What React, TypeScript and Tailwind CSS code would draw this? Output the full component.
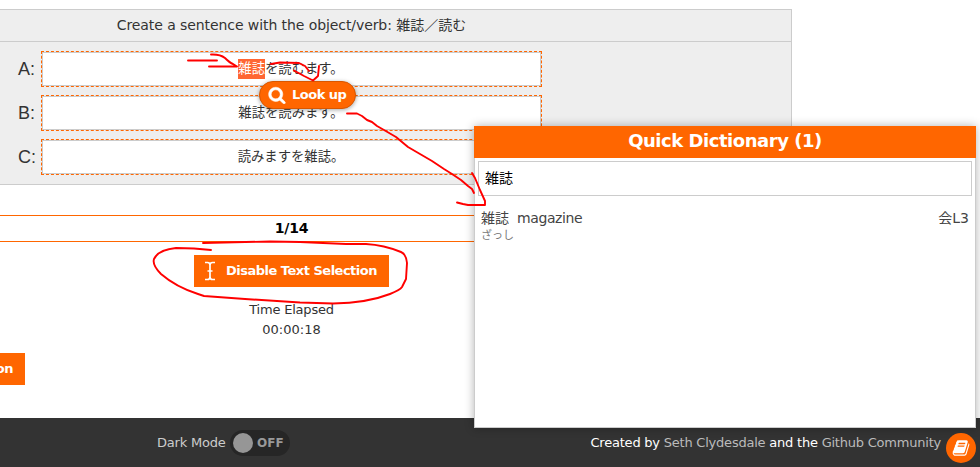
import React from "react";

const BOOK =
  "M1703 478q40 57 18 129l-275 906q-19 64-76.5 107.5t-122.5 43.5h-923q-77 0-148.5-53.5t-99.5-131.5q-24-67-2-127 0-4 3-27t4-37q1-8-3-21.5t-3-19.5q2-11 8-21t16.5-23.5 16.5-23.5q23-38 45-91.5t30-91.5q3-10 .5-30t-.5-28q3-11 17-28t17-23q21-36 42-92t25-90q1-9-2.5-32t.5-28q4-13 22-30.5t22-22.5q19-26 42.5-84.5t27.5-96.5q1-8-3-25.5t-2-26.5q2-8 9-18t18-23 17-21q8-12 16.5-30.5t15-35 16-36 19.5-32 26.5-23.5 36-11.5 47.5 5.5l-1 3q38-9 51-9h761q74 0 114 56t18 130l-274 906q-36 119-71.5 153.5t-128.5 34.5h-869q-27 0-38 15-11 16-1 43 24 70 144 70h923q29 0 56-15.5t35-41.5l300-987q7-22 5-57 38 15 59 43zm-1064 2q-4 13 2 22.5t20 9.5h608q13 0 25.5-9.5t16.5-22.5l21-64q4-13-2-22.5t-20-9.5h-608q-13 0-25.5 9.5t-16.5 22.5zm-83 256q-4 13 2 22.5t20 9.5h608q13 0 25.5-9.5t16.5-22.5l21-64q4-13-2-22.5t-20-9.5h-608q-13 0-25.5 9.5t-16.5 22.5z";
const SEARCH =
  "M1216 832q0-185-131.5-316.5t-316.5-131.5-316.5 131.5-131.5 316.5 131.5 316.5 316.5 131.5 316.5-131.5 131.5-316.5zm512 832q0 52-38 90t-90 38q-54 0-90-38l-343-342q-179 124-399 124-143 0-273.5-55.5t-225-150-150-225-55.5-273.5 55.5-273.5 150-225 225-150 273.5-55.5 273.5 55.5 225 150 150 225 55.5 273.5q0 220-124 399l343 343q37 37 37 90z";

function Option({ letter, children }: { letter: string; children: React.ReactNode }) {
  return (
    <div className="flex h-9 items-center">
      <div className="w-[23px] shrink-0 font-['Liberation_Sans',sans-serif] text-[18px] leading-9">{letter}:</div>
      <div className="h-9 w-[501px] border border-dashed border-[#f60]">
        <div className="h-full border border-[#ccc] bg-white pr-px text-center text-[13.33px] leading-8">{children}</div>
      </div>
    </div>
  );
}

function LookUp() {
  return (
    <div className="absolute left-[259px] top-[81px] flex h-7 w-[97px] items-center rounded-full border border-[#d95700] bg-[#f60] pl-[8px] text-[13px] font-bold tracking-[-0.5px] text-white shadow-[0_1px_4px_rgba(0,0,0,0.35)]">
      <svg className="mr-[6px] size-[18px] shrink-0" viewBox="0 0 1792 1792" fill="currentColor" stroke="currentColor" strokeWidth="50">
        <path d={SEARCH} />
      </svg>
      <span className="whitespace-nowrap">Look up</span>
    </div>
  );
}

function Dictionary() {
  return (
    <div className="absolute left-[474px] top-[126px] flex h-[302px] w-[502px] flex-col border border-t-0 border-[#ccc] bg-white shadow-[0_0_9px_rgba(0,0,0,0.3)]">
      <div className="-mx-px h-8 bg-[#f60] text-center text-[18px] font-bold leading-[30px] tracking-[-0.46px] text-white">Quick Dictionary (1)</div>
      <div className="mx-[3px] mt-[3px] h-[35px] border border-[#ccc] pl-[6px] text-[14px] leading-[33px] text-black">雑誌</div>
      <div className="mt-[13px] flex justify-between px-[6px] text-[14px] leading-[18px] text-[#444]">
        <div>
          <div className="flex gap-2">
            <span>雑誌</span>
            <span className="tracking-[-0.4px]">magazine</span>
          </div>
          <div className="text-[11px] leading-[17px] text-[#777]">ざっし</div>
        </div>
        <div>会L3</div>
      </div>
    </div>
  );
}

function Annotations() {
  return (
    <svg className="pointer-events-none absolute inset-0" width="980" height="467" fill="none" stroke="#f00" strokeWidth="1.9" strokeLinecap="round" strokeLinejoin="round">
      <path d="M188 60.5H217M209 66.5H237M211 54.500Q220 54 225 58Q230 63 233 64L237 66.500" />
      <path d="M271 64L280 62.500L299 63L305 66L309 71M294 70.500L304 76L313 80.500L318 76L319 66" />
      <path d="M347 113.500H357L362 116L367 120L372 122L377 126L384 130L396 137L408 147L420 154L432 161L444 169L452 174L461 180L468 186L472 189L474 193" />
      <path d="M472 173L475 178L480 190L485 201V205H468L463 204L457 202.500" />
      <path d="M211 250L194 248.500L176 248Q158 250 154 259Q152 265 161 274Q176 287 198 294L204 296L245 299L300 302.500L333 303.500Q367 303 390 294Q400 290 402 287L406 279L407 263Q406 254 401 252Q384 245 366 244L346 244L300 242L270 241.500L203 243" />
    </svg>
  );
}

export default function App() {
  return (
    <div className="relative h-[467px] w-[980px] overflow-hidden bg-white font-['DejaVu_Sans','Noto_Sans_CJK_JP',sans-serif] text-[13px] text-[#333]">
      <main className="-ml-[209px] flex h-[418px] w-[1001px] flex-col pt-[9px]">
        <section className="h-[176px] shrink-0 border border-[#ccc] bg-[#eee]">
          <h1 className="h-8 border-b border-[#ccc] text-center text-[14px] leading-[30px]">
            <span className="tracking-[-0.08px]">Create a sentence with the object/verb:</span> 雑誌／読む
          </h1>
          <div className="ml-[226px] mt-[9px] flex flex-col gap-2">
            <Option letter="A">
              <span className="inline-block h-5 bg-[#ff6633] align-middle leading-5 text-white">雑誌</span>を読むます。
            </Option>
            <Option letter="B">雑誌を読みます。</Option>
            <Option letter="C">読みますを雑誌。</Option>
          </div>
        </section>
        <div className="mt-[30px] h-[27px] shrink-0 border-y border-[#f60] text-center text-[14px] font-bold leading-[25px] tracking-[-0.2px] text-black">1/14</div>
        <button className="mt-[13px] flex h-8 w-[195px] shrink-0 items-center self-center bg-[#f60] pl-[10px] font-bold text-white">
          <svg className="mr-[10px] h-5 w-3" viewBox="0 0 12 20" fill="none" stroke="currentColor" strokeWidth="1.7">
            <path d="M1 1.500H3.500Q6 1.500 6 4Q6 1.500 8.500 1.500H11M6 4V16M1 18.500H3.500Q6 18.500 6 16Q6 18.500 8.500 18.500H11M3.500 10H8.500" />
          </svg>
          <span className="whitespace-nowrap tracking-[-0.5px]">Disable Text Selection</span>
        </button>
        <div className="mt-[13px] text-center leading-5">
          <div className="tracking-[-0.2px]">Time Elapsed</div>
          <div>00:00:18</div>
        </div>
        <button className="mt-[13px] h-8 w-[234px] shrink-0 bg-[#f60] pr-3 text-right font-bold leading-8 tracking-[-0.5px] text-white">Next Question</button>
      </main>
      <footer className="flex h-[49px] items-center bg-[#333] pl-[157px] pr-[39px]">
        <span className="w-[73px] whitespace-nowrap tracking-[-0.2px] text-[#ccc]">Dark Mode</span>
        <div className="flex h-[26px] w-[60px] items-center rounded-full bg-[#262626] pl-[3px] text-[12px] font-bold text-[#999]">
          <span className="mr-1 size-5 shrink-0 rounded-full bg-[#969696]" />
          OFF
        </div>
        <p className="ml-auto whitespace-nowrap tracking-[-0.22px] text-white">
          Created by <span className="text-[#bbb]">Seth Clydesdale</span> and the <span className="text-[#bbb]">Github Community</span>
        </p>
      </footer>
      <LookUp />
      <Dictionary />
      <div className="absolute left-[946px] top-[433px] flex size-[30px] items-center justify-center rounded-full bg-[#f60] text-white">
        <svg className="size-[18px]" viewBox="0 0 1792 1792" fill="currentColor">
          <path d={BOOK} />
        </svg>
      </div>
      <Annotations />
    </div>
  );
}
